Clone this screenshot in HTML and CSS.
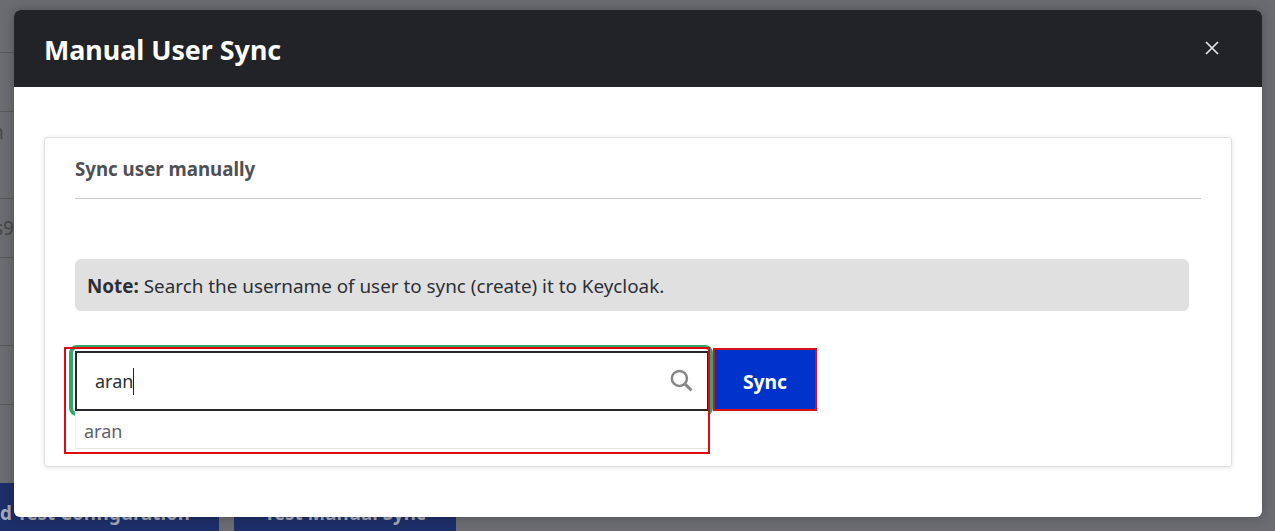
FILE: index.html
```html
<!doctype html>
<html>
	<head>
	<meta charset="UTF-8">
	<title>Manual User Sync</title>
	<link rel="stylesheet" href="styles.css">
	</head>

	<body>
		<div class="page">
			<div class="rows">
				<div class="row row-a"></div>
				<div class="row row-b"></div>
				<div class="row row-c"><span class="row-text row-text-n">n</span></div>
				<div class="row row-d"><span class="row-text row-text-s">s9</span></div>
				<div class="row row-e"></div>
				<div class="row row-f"></div>
			</div>
			<div class="actions">
				<div class="page-btn page-btn-save">Save and Test Configuration</div>
				<div class="page-btn page-btn-test">Test Manual Sync</div>
			</div>
		</div>

		<div class="modal">
			<div class="modal-head">
				<h1 class="modal-title">Manual User Sync</h1>
				<svg class="close" viewBox="0 0 16 16" width="16" height="16">
					<path d="M2 2 L14 14 M14 2 L2 14" stroke="#e6e6e6" stroke-width="1.7" fill="none"/>
				</svg>
			</div>
			<div class="modal-body">
				<div class="card">
					<h2 class="card-title">Sync user manually</h2>
					<div class="note"><b>Note:</b> Search the username of user to sync (create) it to Keycloak.</div>
					<div class="sync-row">
						<div class="search">
							<div class="mark-green"></div>
							<div class="search-input">
								<span class="typed">aran</span><span class="caret"></span>
								<svg class="search-icon" viewBox="0 0 22 22" width="23" height="23">
									<circle cx="9" cy="9" r="7.2" stroke="#868686" stroke-width="2.4" fill="none"/>
									<path d="M14.2 14.2 L20.6 20.6" stroke="#868686" stroke-width="2.8" fill="none"/>
								</svg>
							</div>
							<div class="suggest">aran</div>
							<div class="mark-red"></div>
						</div>
						<button class="sync-btn">Sync</button>
					</div>
				</div>
			</div>
		</div>
	</body>
</html>
```

FILE: styles.css
```css
* { box-sizing: border-box; }

html, body { margin: 0; height: 100%; }

body {
	position: relative;
	height: 531px;
	overflow: hidden;
	background-color: #6b6c71;
	font-family: "Noto Sans", sans-serif;
}

.page { height: 531px; overflow: hidden; }

.rows { height: 483px; }
.row { width: 14px; border-bottom: 1px solid #56575b; white-space: nowrap; }
.row-a { height: 53px; }
.row-b { height: 59px; }
.row-c { height: 87px; padding-top: 7px; }
.row-d { height: 59px; padding-top: 16px; }
.row-e { height: 88px; }
.row-f { height: 59px; }

.row-text { display: block; font-size: 19px; line-height: 26px; color: #45464a; }
.row-text-n { margin-left: -8px; }
.row-text-s { margin-left: -6px; }

.actions { display: flex; gap: 15px; }
.page-btn {
	height: 48px;
	padding-top: 17px;
	background-color: #1d2f69;
	color: #a3a8b8;
	font-size: 18.8px;
	line-height: 27px;
	font-weight: 700;
	white-space: nowrap;
}
.page-btn-save {
	width: 340px;
	margin-left: -121px;
	padding-right: 29px;
	text-align: right;
}
.page-btn-test { width: 222px; text-align: center; }

.modal {
	position: absolute;
	left: 14px;
	top: 10px;
	width: 1248px;
	height: 507px;
	background-color: #fff;
	border-radius: 6px;
	box-shadow: 0 0 12px rgba(0, 0, 0, 0.25);
	overflow: hidden;
}

.modal-head {
	height: 77px;
	padding: 0 42px 0 30px;
	background-color: #212327;
	display: flex;
	align-items: center;
	justify-content: space-between;
}
.modal-title { margin: 2px 0 0; font-size: 26.8px; font-weight: 700; color: #fff; }
.close { display: block; margin-top: -1px; }

.modal-body { padding: 50px 30px 0; }

.card {
	height: 330px;
	padding: 0 30px;
	border: 1px solid #e0e0e0;
	border-radius: 3px;
	box-shadow: 0 1px 5px rgba(0, 0, 0, 0.1);
}
.card-title {
	margin: 0;
	height: 61px;
	padding-top: 17px;
	font-size: 18.7px;
	line-height: 28px;
	font-weight: 700;
	color: #4f5054;
	border-bottom: 1px solid #c8c8c8;
}

.note {
	margin: 60px 12px 0 0;
	height: 52px;
	padding: 1px 12px 0;
	background-color: #e0e0e0;
	border-radius: 6px;
	font-size: 18.85px;
	line-height: 52px;
	color: #2c2f36;
}

.sync-row { display: flex; align-items: flex-start; margin-top: 38px; }

.search { position: relative; width: 634px; margin-top: 2px; }

.search-input {
	position: relative;
	height: 60px;
	padding-left: 18px;
	border: 2px solid #26272b;
	background-color: #fff;
	display: flex;
	align-items: center;
	font-size: 18px;
	color: #2c2f36;
}
.caret { width: 1px; height: 27px; background-color: #222; }
.search-icon { position: absolute; right: 14px; top: 16px; }

.suggest {
	position: relative;
	height: 38px;
	padding-left: 8px;
	background-color: #fff;
	border-bottom: 1px solid #e2e2e2;
	border-left: 1px solid #efefef;
	border-right: 1px solid #efefef;
	font-size: 18px;
	line-height: 40px;
	color: #606166;
}

.mark-green {
	position: absolute;
	left: -6px;
	top: -6px;
	width: 644px;
	height: 71px;
	border: 4px solid #33a670;
	border-radius: 8px;
}
.mark-red {
	position: absolute;
	left: -11px;
	top: -4px;
	width: 646px;
	height: 107px;
	border: 2px solid #e00b12;
}

.sync-btn {
	width: 104px;
	height: 63px;
	margin-top: -1px;
	margin-left: 4px;
	padding: 3px 0 0;
	border: 2px solid #d8101c;
	background-color: #0033cc;
	color: #fff;
	font-family: "Noto Sans", sans-serif;
	font-size: 19.3px;
	font-weight: 700;
}
```
